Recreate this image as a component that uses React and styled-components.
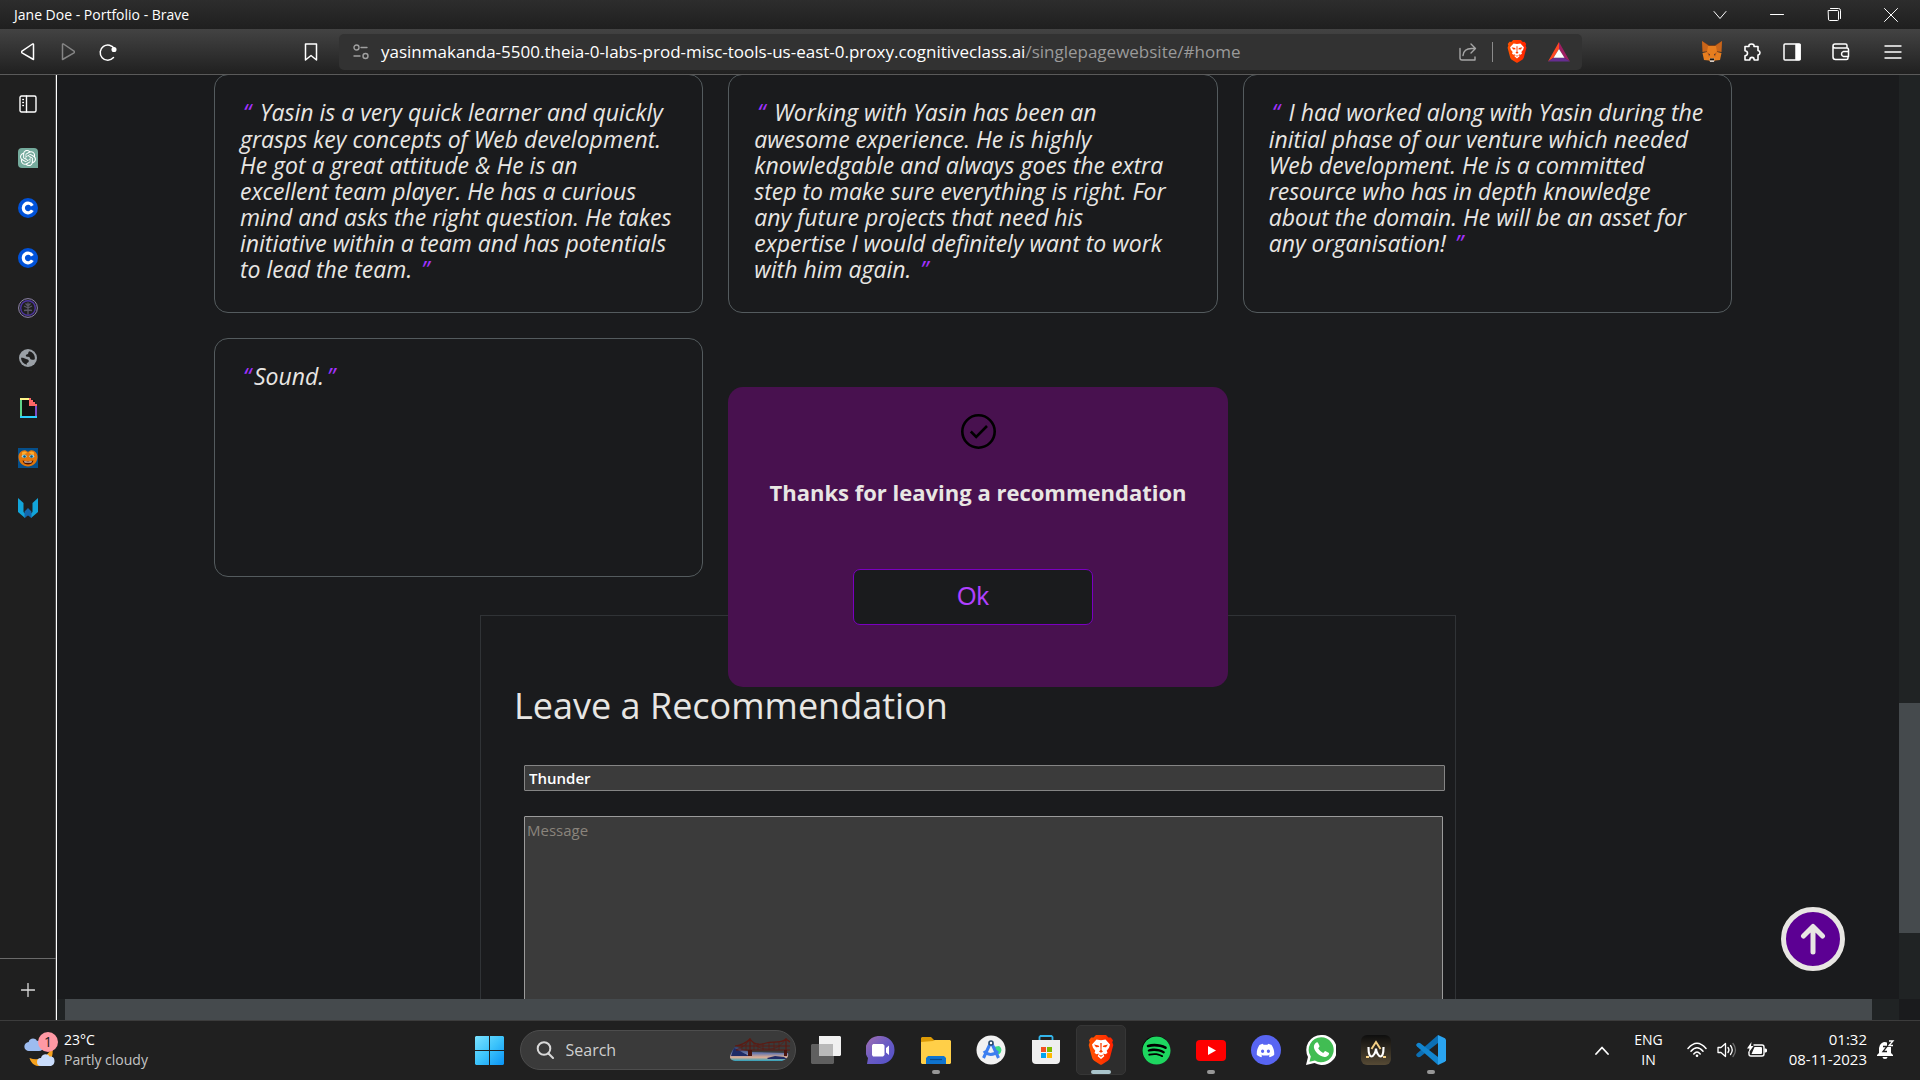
import React from 'react';
import styled, { createGlobalStyle, css } from 'styled-components';
import { SiOpenai } from 'react-icons/si';
import { FaSpotify, FaDiscord } from 'react-icons/fa';

const ui = '"Open Sans", "Noto Sans", sans-serif';

const Global = createGlobalStyle`
  *, *::before, *::after { box-sizing: border-box; }
  html, body, #root { height: 100%; }
  body { margin: 0; background: #1a1b1d; color: #e8e6e3; font-family: ${ui}; overflow: hidden; }
  button, input, textarea { font: inherit; color: inherit; margin: 0; }
  button { padding: 0; border: 0; background: none; }
  svg { display: block; flex: none; }
`;

const Desktop = styled.div`
  height: 100%;
  display: grid;
  grid-template-rows: 29px 46px minmax(0, 1fr) 60px;
`;

/* ---------- window chrome ---------- */

const TitleBar = styled.header`
  display: flex;
  align-items: center;
  justify-content: space-between;
  padding: 0 1px 0 14px;
  background: linear-gradient(#2d2d2d, #1f1f1f);
  color: #fff;
  font-size: 14px;
  line-height: 20px;
`;

const WindowControls = styled.div`
  display: flex;
`;

const WindowButton = styled.button`
  width: 57px;
  height: 29px;
  display: grid;
  place-items: center;
`;

const Toolbar = styled.div`
  display: flex;
  align-items: center;
  padding: 0 4px 0 8px;
  background: linear-gradient(#434343, #202020);
  border-bottom: 1px solid #5a5a5a;
`;

const ToolButton = styled.button`
  width: ${(p) => p.$w || 40}px;
  height: 34px;
  display: grid;
  place-items: center;
`;

const NavGroup = styled.div`
  display: flex;
  width: 284px;
`;

const AddressBar = styled.div`
  flex: 1;
  display: flex;
  align-items: center;
  max-width: 1243px;
  height: 36px;
  margin-left: 9px;
  padding: 0 1px 0 14px;
  border-radius: 5px;
  background: #323232;
`;

const Url = styled.div`
  flex: 1;
  margin-left: 12px;
  font-size: 17px;
  line-height: 24px;
  color: #fff;
  white-space: nowrap;
  span { color: #9a9a9a; }
`;

const Divider = styled.i`
  width: 1px;
  height: 20px;
  margin: 0 4px;
  background: #8b8b8b;
`;

const Extensions = styled.div`
  display: flex;
  margin-left: auto;
`;

/* ---------- body ---------- */

const Body = styled.div`
  display: grid;
  grid-template-columns: 57px minmax(0, 1fr);
  min-height: 0;
`;

const Side = styled.nav`
  display: flex;
  flex-direction: column;
  justify-content: space-between;
  background: #1f1f1f;
  border-right: 1px solid #fff;
  box-shadow: inset -1px 0 #4a4a4a;
`;

const SideList = styled.div`
  display: flex;
  flex-direction: column;
`;

const SideButton = styled.button`
  width: 56px;
  height: ${(p) => p.$h || 50}px;
  display: grid;
  place-items: center;
`;

const SideFoot = styled.div`
  border-top: 1px solid #6a6a6a;
`;

const Viewport = styled.div`
  display: grid;
  grid-template: minmax(0, 1fr) 21px / minmax(0, 1fr) 21px;
  min-height: 0;
`;

const Page = styled.main`
  position: relative;
  overflow: hidden;
  background: #1a1b1d;
`;

const VTrack = styled.div`
  display: flex;
  flex-direction: column;
  justify-content: flex-end;
  padding-bottom: 66px;
  background: #202324;
  &::before { content: ''; height: 230px; background: #454a4d; }
`;

const HTrack = styled.div`
  display: flex;
  padding: 0 27px 0 8px;
  background: #202324;
  &::before { content: ''; flex: 1; background: #454a4d; }
`;

const Cards = styled.section`
  display: grid;
  grid-template-columns: repeat(3, minmax(0, 1fr));
  grid-auto-rows: 239px;
  gap: 25px;
  margin: -1px 167px 0 157px;
`;

const Card = styled.blockquote`
  margin: 0;
  padding: 24px 25px;
  border: 1px solid #545b5e;
  border-radius: 14px;
  font-size: 23px;
  font-style: italic;
  line-height: 26px;
  white-space: nowrap;
`;

const Quote = styled.span`
  margin: 0 3px;
  color: #a232ff;
  line-height: 27px;
`;

const FormRow = styled.section`
  display: flex;
  justify-content: center;
  padding-right: 20px;
`;

const Form = styled.form`
  width: 976px;
  margin-top: 38px;
  padding: 67px 10px 0 43px;
  border: 1px solid #303336;
`;

const FormTitle = styled.h2`
  margin: 0 0 36px -10px;
  font-size: 36px;
  font-weight: 400;
  line-height: 46px;
`;

const NameInput = styled.input`
  display: block;
  width: 100%;
  height: 26px;
  padding: 0 4px;
  border: 1px solid #858585;
  border-radius: 1px;
  background: #3b3b3b;
  color: #fff;
  font-size: 15px;
  font-weight: 600;
  outline: 0;
`;

const Message = styled.textarea`
  display: block;
  width: calc(100% - 2px);
  height: 260px;
  margin-top: 25px;
  padding: 2px;
  border: 1px solid #9b9b9b;
  border-radius: 1px;
  background: #3b3b3b;
  font-size: 15px;
  line-height: 22px;
  resize: none;
  outline: 0;
  &::placeholder { color: #8a847c; opacity: 1; }
`;

const Modal = styled.div`
  position: absolute;
  top: 312px;
  left: calc(50% - 250px);
  width: 500px;
  height: 300px;
  padding-top: 27px;
  display: flex;
  flex-direction: column;
  align-items: center;
  border-radius: 15px;
  background: #48114f;
`;

const ModalTitle = styled.h3`
  margin: 27px 0 61px;
  font-size: 22px;
  font-weight: 700;
  line-height: 32px;
`;

const OkButton = styled.button`
  width: 240px;
  height: 56px;
  margin-right: 10px;
  padding-bottom: 2px;
  border: 1px solid #7a00c0;
  border-radius: 7px;
  background: #1a1b1d;
  color: #b040ff;
  font-family: "Liberation Sans", Arial, sans-serif;
  font-size: 25px;
`;

const UpButton = styled.a`
  position: absolute;
  right: 54px;
  bottom: 28px;
  width: 64px;
  height: 64px;
  display: grid;
  place-items: center;
  border: 5px solid #e8e6e3;
  border-radius: 50%;
  background: #5c0093;
`;

/* ---------- taskbar ---------- */

const Taskbar = styled.footer`
  display: grid;
  grid-template-columns: 1fr auto 1fr;
  align-items: center;
  background: #202020;
  box-shadow: inset 0 1px #3c3c3c;
`;

const Weather = styled.button`
  display: flex;
  align-items: center;
  gap: 6px;
  padding-left: 24px;
  text-align: left;
  font-size: 14px;
  line-height: 20px;
  color: #c4c4c4;
  b { display: block; font-weight: 400; color: #fff; }
`;

const Apps = styled.div`
  display: flex;
  align-items: center;
  gap: 5px;
`;

const AppTile = styled.button`
  position: relative;
  width: 50px;
  height: 50px;
  display: grid;
  place-items: center;
  border: 1px solid transparent;
  border-radius: 5px;
  ${(p) => p.$active && css`background: #2d2d2d; border-color: #363636;`}
  ${(p) => p.$running && css`
    &::after {
      content: '';
      position: absolute;
      bottom: 0;
      left: 50%;
      width: ${p.$active ? 20 : 8}px;
      height: 4px;
      border-radius: 2px;
      background: ${p.$active ? '#a9c4cb' : '#979797'};
      transform: translateX(-50%);
    }
  `}
`;

const SearchBox = styled.label`
  width: 276px;
  height: 40px;
  display: flex;
  align-items: center;
  padding: 0 4px 0 15px;
  border: 1px solid #4d4d4d;
  border-radius: 20px;
  background: #3a3a3a;
  input {
    flex: 1;
    min-width: 0;
    margin-left: 12px;
    padding: 0;
    border: 0;
    outline: 0;
    background: none;
    font-size: 16px;
  }
  input::placeholder { color: #cfcfcf; opacity: 1; }
`;

const Tray = styled.div`
  display: flex;
  align-items: center;
  justify-content: flex-end;
  padding-right: 25px;
  color: #fff;
  font-size: 14px;
  line-height: 20px;
`;

const Lang = styled.button`
  margin: 0 24px 0 25px;
  text-align: center;
  span { display: block; }
`;

const Status = styled.button`
  display: flex;
  align-items: center;
  gap: 10px;
`;

const Clock = styled.button`
  margin: 0 10px 0 22px;
  padding-bottom: 2px;
  text-align: right;
  font-size: 15px;
  span { display: block; }
`;

/* ---------- drawings ---------- */

const Line = ({ w = 20, h = w, sw = 1.5, color = '#fff', children }) => (
  <svg width={w} height={h} viewBox={`0 0 ${w} ${h}`} fill="none" stroke={color} strokeWidth={sw} strokeLinecap="round" strokeLinejoin="round">
    {children}
  </svg>
);

const BraveLion = ({ w, h }) => (
  <svg width={w} height={h} viewBox="0 0 26 30">
    <defs>
      <linearGradient id="lion" x1="0" x2="1"><stop offset="0" stopColor="#ff5500" /><stop offset="1" stopColor="#ff2000" /></linearGradient>
    </defs>
    <path fill="url(#lion)" d="M8 0h10l2.500 2.600 2.300-.2L25 5.200l-.7 2 1 2.800-3.300 12.500c-.4 1.400-1 2.300-2.200 3.200L14 29.500c-.6.400-1.400.4-2 0l-5.800-3.800C5 24.800 4.400 23.900 4 22.500L.7 10l1-2.800-.7-2L3.200 2.400l2.300.2z" />
    <path fill="#fff" d="M8.500 4.500L13 5.300l4.500-.8 4.500 5-1 3.200-2.300 3 .8 2.300-2.200 1.300-2-.8 1 2.700-3.300 2.800-3.300-2.800 1-2.700-2 .8L6.500 18l.8-2.300L5 12.700 4 9.500z" />
    <path fill="#ff3d00" d="M6 9.500l4.500 1 .8 1.500-3.300.3zM20 9.500l-4.500 1-.8 1.500 3.300.3zM12.300 8h1.400l-.2 7 1.500 1.500-2 1.300-2-1.300 1.500-1.500zM10 19.300l3 1.200 3-1.200-3 2.600z" />
  </svg>
);

const Metamask = () => (
  <svg width="20" height="22" viewBox="0 0 20 22">
    <path fill="#763e1a" d="M0 0l7 4h6l7-4-1 9-4 3H5L1 9z" />
    <path fill="#c9651a" d="M0 0l7 5-1 5-5.500 1zM20 0l-7 5 1 5 5.500 1z" />
    <path fill="#e77e1f" d="M6 5h8l1 6 4.500 1-1.500 7-5 .5-1.500 1.500h-3L7 19.500 2 19 .5 12 5 11z" />
    <path fill="#cd6116" d="M5 11l3 2-1 3zM15 11l-3 2 1 3z" />
    <path fill="#233447" d="M6 12.500l2 1v1.200zM14 12.500l-2 1v1.200z" />
    <path fill="#d8cbc0" d="M7.500 17.500h5L12 21H8z" />
    <path fill="#161616" d="M8 17.500h4l.3 1.800H7.700z" />
  </svg>
);

const Bat = () => (
  <svg width="22" height="20" viewBox="0 0 22 24" preserveAspectRatio="none">
    <path fill="#ff4724" d="M11 0v8.500L5.500 19 0 23.500z" />
    <path fill="#9e1f63" d="M11 0l11 23.500L16.500 19 11 8.500z" />
    <path fill="#662d91" d="M0 23.500L5.500 19h11l5.500 4.500z" />
    <path fill="#fff" d="M11 8.500L16.500 19h-11z" />
  </svg>
);

const CoinC = () => (
  <svg width="20" height="20" viewBox="0 0 20 20">
    <circle cx="10" cy="10" r="10" fill="#0052d9" />
    <path d="M14.300 7.700A4.800 4.800 0 1 0 14.300 12.300" fill="none" stroke="#fff" strokeWidth="3.200" />
  </svg>
);

const Gpt = styled.span`
  width: 20px;
  height: 20px;
  display: grid;
  place-items: center;
  border-radius: 4px 4px 0 4px;
  background: #74aa9c;
  color: #fff;
`;

const Tree = () => (
  <svg width="20" height="20" viewBox="0 0 20 20" fill="none">
    <circle cx="10" cy="10" r="9.400" stroke="#9186ad" strokeWidth="1" />
    <circle cx="10" cy="10" r="7.300" stroke="#4d34a0" strokeWidth="1.400" />
    <path d="M10 4.500v12M10 10L6 8M10 10l4-2M10 12l-4 .5M10 12l4 .5M7.500 5.500L10 8l2.500-2.500" stroke="#5b5869" strokeWidth="1.300" />
  </svg>
);

const Globe = () => (
  <svg width="18" height="18" viewBox="0 0 18 18">
    <circle cx="9" cy="9" r="9" fill="#9aa0a6" />
    <path fill="#1f1f1f" d="M10.500 2.200c-1.500.6-1 1.800-1.500 2.600-.6.900-2 .5-2.200 1.700-.1 1 .8 1.300 2.200 1.300 1.800 0 2 1 2.200 2 .2.900 1.500 1 3.600 1 .6 0 1-.4 1.100-1.200a7 7 0 0 0-5.400-7.400zM2 8.800a7 7 0 0 0 5.800 7V13.900c1.300-.2 2-.7 2-1.900-.1-1.500-1.800-1.600-2.800-2C5.500 9.200 4 8.500 2 8.800z" />
  </svg>
);

const Giphy = () => (
  <svg width="17" height="20" viewBox="0 0 17 20">
    <path fill="#121212" d="M2 2h13v16H2z" />
    <path fill="#fff78a" d="M0 0h9v2H0z" />
    <path fill="#5fd38a" d="M0 2h2v16H0z" />
    <path fill="#2bd0ff" d="M0 18h17v2H0z" />
    <path fill="#7a4fc9" d="M15 8h2v10h-2z" />
    <path fill="#ff6666" d="M9 0h2v2h2v2h2v2h2v2H9z" />
  </svg>
);

const Smile = () => (
  <svg width="20" height="20" viewBox="0 0 20 20">
    <path fill="#064f8a" d="M0 0h20v20H0z" />
    <path fill="#e2760b" d="M10 4C6-.5 0 4 .5 9.500 1 15 5 18.500 10 18.500S19 15 19.500 9.500C20 4 14-.5 10 4z" />
    <path fill="#ffae2d" d="M4 4.500c2-1.500 4-1 5 .5L4 7zM16 4.500c-2-1.500-4-1-5 .5l5 2z" />
    <ellipse cx="6.200" cy="8.300" rx="2.400" ry="1.700" fill="#9fd3e2" /><ellipse cx="13.800" cy="8.300" rx="2.400" ry="1.700" fill="#9fd3e2" />
    <circle cx="6.500" cy="8.500" r="1.300" fill="#07587f" /><circle cx="13.500" cy="8.500" r="1.300" fill="#07587f" />
    <path fill="#4a1300" d="M4.500 12.500c3 1 8 1 11 0-1 3-3 4-5.500 4s-4.500-1-5.500-4z" />
    <path fill="#fff" d="M6 13.200c2.500.6 5.500.6 8 0l-.7 1.300H6.700z" />
  </svg>
);

const Wing = () => (
  <svg width="20" height="20" viewBox="0 0 20 20">
    <path fill="#12a5da" d="M0 0l5.500 5v9L8 16.500 7 20 0 14zM20 0l-5.500 5v9L12 16.500l1 3.500 7-6z" />
    <path fill="#1467ae" d="M10 10l3.500 3.500V20L10 17.500 6.500 20v-6.500z" />
  </svg>
);

const WeatherIcon = () => (
  <svg width="34" height="36" viewBox="0 0 34 36">
    <path fill="#f6a11c" d="M28 15c3 10-4 20-14 19-4-.5-7-3-8.500-8C16 30 24 24 28 15z" />
    <path fill="#9dbcf0" d="M5 19a4.500 4.500 0 0 1-.3-9C5 6.500 11 5 13 9c4-1 7 2 6 6 0 2-1 4-4 4z" />
    <path fill="#c9dcfb" d="M17 34a4 4 0 0 1 0-8c.5-4.500 7-5 8.500-1.500 4-.5 5 2 5 4.500s-1.500 5-4.500 5z" />
    <circle cx="24" cy="10" r="10" fill="#ff99a4" />
    <text x="24" y="15" textAnchor="middle" fontSize="14" fill="#1b1b1b" fontFamily="Open Sans, sans-serif">1</text>
  </svg>
);

const WinLogo = () => (
  <svg width="29" height="29" viewBox="0 0 29 29">
    <defs>
      <linearGradient id="win" gradientUnits="userSpaceOnUse" x1="0" y1="0" x2="29" y2="29"><stop offset="0" stopColor="#7be2ff" /><stop offset=".5" stopColor="#3cc3fb" /><stop offset="1" stopColor="#0a93f5" /></linearGradient>
    </defs>
    <path fill="url(#win)" d="M1 0h13v14H0V1zM15 0h13l1 1v13H15zM0 15h14v14H1l-1-1zM15 15h14v13l-1 1H15z" />
  </svg>
);

const Bridge = () => (
  <svg width="61" height="24" viewBox="0 0 61 24">
    <defs>
      <linearGradient id="sky" x1="0" y1="0" x2="0" y2="1"><stop offset="0" stopColor="#27408e" stopOpacity=".5" /><stop offset=".5" stopColor="#6f7cab" /><stop offset=".75" stopColor="#e0ae94" /><stop offset="1" stopColor="#28a0bd" /></linearGradient>
    </defs>
    <path fill="url(#sky)" d="M6 8c5 4 10 5 16 6l36 1c1 4-1 6-6 8H7c-5 0-7-2-7-4s3-9 6-11z" />
    <path fill="#1f2b66" d="M4 10c6 3 12 6 15 8H1zM37 20l8-2 9 1 3 2H38z" />
    <path fill="none" stroke="#5d1a12" strokeWidth="1.200" d="M5 8C12 7 17 4 20 1c5 7 11 6 16 4 6-2 15 1 20-4l4 3M5 8h55M6 12h54M20 0v18M56 0v18" />
    <path fill="none" stroke="#5d1a12" strokeWidth=".7" d="M20 1c-3 6-8 8-14 11M22 3c4 6 9 8 16 8 8 0 13-3 17-9M28 5v7M33 5v7M39 4v8M44 4v8M49 4v8M12 6v6M16 4v8M24 5v7" />
    <path fill="#4a140f" d="M18 12h4v6h-4zM54 12h3v6h-3z" />
  </svg>
);

const TaskView = () => (
  <svg width="30" height="28" viewBox="0 0 30 28">
    <path fill="#5f5f5f" d="M1 8h22v19l-1 1H1l-1-1V9z" />
    <path fill="#f1f1f1" d="M8 0h21l1 1v18l-1 1H8z" />
    <path fill="#b9b9b9" d="M8 8h14v12H8z" />
  </svg>
);

const Chat = () => (
  <svg width="29" height="29" viewBox="0 0 29 29">
    <defs>
      <linearGradient id="chat" x1="0" y1="0" x2="1" y2="1"><stop offset="0" stopColor="#a36fb0" /><stop offset=".5" stopColor="#6a5bc4" /><stop offset="1" stopColor="#5150c8" /></linearGradient>
    </defs>
    <path fill="url(#chat)" d="M14.500 0a14 14 0 1 1 0 28H1l1-6A14 14 0 0 1 14.500 0z" />
    <path fill="#fff" d="M7 8h10l1.500 1.500v9.500L17 20.500H7L6 19V9.500zM20 12l3-2.500v9.500l-3-2.500z" />
  </svg>
);

const Folder = () => (
  <svg width="30" height="27" viewBox="0 0 30 27">
    <path fill="#dd9b06" d="M0 1l1-1h9l3 3v5H0z" />
    <path fill="#ffcf48" d="M0 5l12-1 1.500-1H29l1 1v22l-1 1H1l-1-1z" />
    <path fill="#0f74cf" d="M5 27v-6l2-2h16l2 2v6z" />
    <path stroke="#0a4a8a" strokeWidth="1.200" d="M9 22.500h12" />
  </svg>
);

const Studio = () => (
  <svg width="30" height="30" viewBox="0 0 30 30">
    <circle cx="15" cy="15" r="14.500" fill="#f2f2f2" />
    <path fill="#3ddc84" d="M17 12l6-1a5 5 0 0 1-1 9l-2-1z" />
    <path fill="none" stroke="#3d7ff0" strokeWidth="3" d="M14 9L7.500 23M16 9l6.500 14M8 16c3 4.500 10 4.500 14 0" />
    <circle cx="15" cy="8" r="2" fill="#fff" stroke="#2c4a6b" strokeWidth="1.600" />
  </svg>
);

const Store = () => (
  <svg width="30" height="30" viewBox="0 0 30 30">
    <path fill="none" stroke="#33b5ea" strokeWidth="1.800" d="M8.500 6V2l1-1h11l1 1v4" />
    <path fill="#efefef" d="M1 5h28v20q0 4-4 4H5q-4 0-4-4z" />
    <path fill="#f25022" d="M10 12h5v5h-5z" /><path fill="#7fba00" d="M16 12h5v5h-5z" />
    <path fill="#00a4ef" d="M10 18h5v5h-5z" /><path fill="#ffb900" d="M16 18h5v5h-5z" />
  </svg>
);

const YouTube = () => (
  <svg width="30" height="21" viewBox="0 0 30 21">
    <rect width="30" height="21" rx="4" fill="#f00" />
    <path fill="#fff" d="M12 6l8 4.500-8 4.500z" />
  </svg>
);

const Round = styled.span`
  width: ${(p) => p.$s}px;
  height: ${(p) => p.$s}px;
  display: grid;
  place-items: center;
  border-radius: 50%;
  background: ${(p) => p.$bg};
  color: ${(p) => p.$fg};
`;

const Whats = () => (
  <svg width="30" height="30" viewBox="0 0 30 30">
    <path fill="#fff" d="M15 0a15 15 0 1 1-6.500 28L0 30l2-8A15 15 0 0 1 15 0z" />
    <path fill="#41bd53" d="M15.200 2.300a12.500 12.500 0 1 1-6.300 23.300l-5.400 1.200 1.300-5.200A12.500 12.500 0 0 1 15.200 2.300z" />
    <path fill="#fff" d="M10.500 7.500c.6-.3 1.300-.1 1.600.4l1.400 3c.1.400 0 .8-.3 1.100l-1 1.300c1.200 2.300 2.800 3.700 5 4.600l1.400-1.500c.3-.3.7-.4 1-.2l3 1.500c.5.300.6.700.4 1.400-.6 2-2.600 3-4.400 2.800-5.500-.7-10-5.200-10.700-9.700-.2-1.900.9-3.900 2.600-4.700z" />
  </svg>
);

const Aw = () => (
  <svg width="30" height="30" viewBox="0 0 30 30">
    <defs><linearGradient id="aw" x1="0" y1="0" x2="0" y2="1"><stop offset="0" stopColor="#0e0e0e" /><stop offset="1" stopColor="#564a35" /></linearGradient></defs>
    <rect width="30" height="30" rx="6" fill="url(#aw)" />
    <path fill="none" stroke="#f4cf83" strokeWidth="2" d="M10.500 14L15 7l4.500 7M5 22h3M22 22h3" />
    <path fill="none" stroke="#fff" strokeWidth="2.200" d="M7.500 12c0 7 1.500 9.500 3 9.500s4.500-4 4.500-8c0 4 3 8 4.500 8s3-2.500 3-9.500" />
  </svg>
);

const Code = () => (
  <svg width="30" height="30" viewBox="0 0 30 30">
    <path fill="#0c6fb4" d="M0 20l1 1.500 1.500.7 1.500-.2L22 8V0L1 18.500z" />
    <path fill="#1285cf" d="M0 10l1-1.500 1.500-.7L4 8l18 14v8L1 11.500z" />
    <path fill="#2aa4f0" d="M22 0l7 3.300 1 1.500v20.400l-1 1.500L22 30z" />
  </svg>
);

const Bell = () => (
  <svg width="18" height="20" viewBox="0 0 18 20">
    <path fill="#fff" d="M0 15l2-2V8a6 6 0 0 1 8-5.600V7h4v6l2 2v1H0zM5.500 17h5a2.500 2 0 0 1-5 0z" />
    <path fill="none" stroke="#fff" strokeWidth="1.300" d="M12 1h4l-4 4.500h4" />
    <path fill="none" stroke="#202020" strokeWidth="1.300" d="M6 6.500h4L6 11.500h4" />
  </svg>
);

const sideApps = [
  ['ChatGPT', <Gpt><SiOpenai size={16} /></Gpt>],
  ['Coinbase', <CoinC />],
  ['Coinbase Wallet', <CoinC />],
  ['Arbor', <Tree />],
  ['Website', <Globe />],
  ['Giphy', <Giphy />],
  ['Smile', <Smile />],
  ['Wing', <Wing />],
];

const pinned = [
  ['Task view', <TaskView />],
  ['Chat', <Chat />],
  ['File Explorer', <Folder />, true],
  ['Android Studio', <Studio />],
  ['Microsoft Store', <Store />],
  ['Brave', <BraveLion w={26} h={30} />, true, true],
  ['Spotify', <Round $s={28} $bg="#000" $fg="#1ed760"><FaSpotify size={29} /></Round>],
  ['YouTube', <YouTube />, true],
  ['Discord', <Round $s={30} $bg="#5865f2" $fg="#fff"><FaDiscord size={19} /></Round>],
  ['WhatsApp', <Whats />],
  ['AW', <Aw />],
  ['Visual Studio Code', <Code />, true],
];

const recommendations = [
  [
    'Yasin is a very quick learner and quickly',
    'grasps key concepts of Web development.',
    'He got a great attitude & He is an',
    'excellent team player. He has a curious',
    'mind and asks the right question. He takes',
    'initiative within a team and has potentials',
    'to lead the team.',
  ],
  [
    'Working with Yasin has been an',
    'awesome experience. He is highly',
    'knowledgable and always goes the extra',
    'step to make sure everything is right. For',
    'any future projects that need his',
    'expertise I would definitely want to work',
    'with him again.',
  ],
  [
    'I had worked along with Yasin during the',
    'initial phase of our venture which needed',
    'Web development. He is a committed',
    'resource who has in depth knowledge',
    'about the domain. He will be an asset for',
    'any organisation!',
  ],
];

export default function App() {
  return (
    <Desktop>
      <Global />
      <TitleBar>
        <span>Jane Doe - Portfolio - Brave</span>
        <WindowControls>
          <WindowButton aria-label="Search tabs"><Line w={14} h={10} sw={1}><path d="M1 1.500l6 7 6-7" /></Line></WindowButton>
          <WindowButton aria-label="Minimize"><Line w={14} h={2} sw={1}><path d="M.5.500h13" /></Line></WindowButton>
          <WindowButton aria-label="Restore"><Line w={14} h={14} sw={1}><path d="M1.500 2.500h9a1 1 0 0 1 1 1v8a1 1 0 0 1-1 1h-8a1 1 0 0 1-1-1zM3.500.500h8a2 2 0 0 1 2 2v8" /></Line></WindowButton>
          <WindowButton aria-label="Close"><Line w={14} h={14} sw={1}><path d="M.5.500l13 13M13.500.500l-13 13" /></Line></WindowButton>
        </WindowControls>
      </TitleBar>

      <Toolbar>
        <NavGroup>
          <ToolButton aria-label="Back"><Line w={14} h={18}><path d="M12.500 1.500v15L1 9.800q-1-.8 0-1.600L11.500 1q1-.4 1 .5z" /></Line></ToolButton>
          <ToolButton aria-label="Forward"><Line w={14} h={18} color="#858585"><path d="M1.500 1.500v15L13 9.800q1-.8 0-1.600L2.500 1q-1-.4-1 .5z" /></Line></ToolButton>
          <ToolButton aria-label="Reload">
            <Line w={18} h={18}><path d="M14.500 14.600A7.600 7.600 0 1 1 15.500 6" /><circle cx="15" cy="6.500" r="1.800" fill="#fff" /></Line>
          </ToolButton>
        </NavGroup>
        <ToolButton aria-label="Bookmark" $w={38}><Line w={14} h={18}><path d="M1.500 1h11v16L7 12.500 1.500 17z" /></Line></ToolButton>
        <AddressBar>
          <Line w={16} h={16} sw={1.4} color="#a0a0a0"><circle cx="3.500" cy="3.500" r="2.500" /><path d="M8 3.500h6M1 12h6" /><circle cx="12.500" cy="12" r="2.500" /></Line>
          <Url>
            yasinmakanda-5500.theia-0-labs-prod-misc-tools-us-east-0.proxy.cognitiveclass.ai<span>/singlepagewebsite/#home</span>
          </Url>
          <ToolButton aria-label="Share"><Line w={18} h={18} sw={1.4} color="#a6a6a6"><path d="M1 5.500v9.500a2 2 0 0 0 2 2h13v-3M4 12.500c.5-4.500 4-7 8.500-7h4M12 1l4.500 4.500L12 10" /></Line></ToolButton>
          <Divider />
          <ToolButton aria-label="Brave Shields"><BraveLion w={20} h={23} /></ToolButton>
          <ToolButton aria-label="Brave Rewards" $w={44}><Bat /></ToolButton>
        </AddressBar>
        <Extensions>
          <ToolButton aria-label="MetaMask"><Metamask /></ToolButton>
          <ToolButton aria-label="Extensions"><Line w={18} h={18} sw={1.6}><path d="M2 3.500h4q-.5-2.500 2.500-2.500t2.500 2.500h4V7.500q2 .5 2 2.300t-2 2.300V17h-3.800q0-2.600-2.200-2.600T6.800 17H2v-4.200q2.500-.3 2.500-2.500T2 7.700z" /></Line></ToolButton>
          <ToolButton aria-label="Sidebar"><Line w={18} h={18}><rect x="1" y="1" width="16" height="16" rx="1" /><path fill="#fff" d="M13 1.500h4v15h-4z" /></Line></ToolButton>
          <ToolButton aria-label="Wallet" $w={58}><Line w={18} h={18}><path d="M15 4V2.500q0-1.500-1.500-1.500H3Q1 1 1 3v11q0 2.500 2.500 2.500h11q1.500 0 1.500-1.500v-1.500M1 3q0 2 2 2h12q1.500 0 1.500 1.500v2M16.500 8.500v5h-5q-2-.5-2-2.500t2-2.500z" /></Line></ToolButton>
          <ToolButton aria-label="Menu" $w={46}><Line w={18} h={14} sw={1.4}><path d="M1 1h16M1 7h16M1 13h16" /></Line></ToolButton>
        </Extensions>
      </Toolbar>

      <Body>
        <Side>
          <SideList>
            <SideButton aria-label="Toggle sidebar" $h={58}><Line w={18} h={18} sw={1.4}><rect x="1" y="1" width="16" height="16" rx="1.500" /><path d="M7.500 1v16M3.800 4.500h.6M3.800 7.500h.6M3.800 10.500h.6" /></Line></SideButton>
            {sideApps.map(([name, icon]) => <SideButton key={name} aria-label={name}>{icon}</SideButton>)}
          </SideList>
          <SideFoot>
            <SideButton aria-label="Add" $h={61}><Line w={14} h={14} sw={1.3} color="#dcdcdc"><path d="M7 .5v13M.5 7h13" /></Line></SideButton>
          </SideFoot>
        </Side>

        <Viewport>
          <Page>
            <Cards>
              {recommendations.map((lines) => (
                <Card key={lines[0]}>
                  <Quote>“ </Quote>
                  {lines.map((line, i) => (
                    <React.Fragment key={line}>{i > 0 && <br />}{line}</React.Fragment>
                  ))}
                  <Quote> ”</Quote>
                </Card>
              ))}
              <Card><Quote>“</Quote>Sound.<Quote>”</Quote></Card>
            </Cards>

            <FormRow>
              <Form onSubmit={(e) => e.preventDefault()}>
                <FormTitle>Leave a Recommendation</FormTitle>
                <NameInput aria-label="Name" defaultValue="Thunder" />
                <Message aria-label="Message" placeholder="Message" />
              </Form>
            </FormRow>

            <Modal role="dialog" aria-labelledby="thanks">
              <Line w={35} h={35} sw={2.6} color="#000"><circle cx="17.500" cy="17.500" r="16.200" /><path strokeLinecap="butt" strokeLinejoin="miter" d="M9.800 17.500l5.400 5.400L26 12" /></Line>
              <ModalTitle id="thanks">Thanks for leaving a recommendation</ModalTitle>
              <OkButton type="button">Ok</OkButton>
            </Modal>

            <UpButton href="#home" aria-label="Back to top">
              <Line w={26} h={32} sw={5} color="#e8e6e3"><path d="M13 29V4M3.500 13L13 3.500l9.500 9.500" /></Line>
            </UpButton>
          </Page>
          <VTrack />
          <HTrack />
        </Viewport>
      </Body>

      <Taskbar>
        <Weather>
          <WeatherIcon />
          <span><b>23°C</b>Partly cloudy</span>
        </Weather>
        <Apps>
          <AppTile aria-label="Start"><WinLogo /></AppTile>
          <SearchBox>
            <Line w={18} h={18} sw={2} color="#d8d8d8"><circle cx="8" cy="7.500" r="6.300" /><path d="M12.500 12.500l4.500 4.500" /></Line>
            <input type="text" placeholder="Search" aria-label="Search" />
            <Bridge />
          </SearchBox>
          {pinned.map(([name, icon, running, active]) => (
            <AppTile key={name} aria-label={name} $running={running} $active={active}>{icon}</AppTile>
          ))}
        </Apps>
        <Tray>
          <button aria-label="Show hidden icons"><Line w={14} h={9} sw={1.8}><path d="M1 8l6-6.500L13 8" /></Line></button>
          <Lang><span>ENG</span><span>IN</span></Lang>
          <Status aria-label="Network, volume and battery">
            <Line w={20} h={16} sw={1.5}><path d="M1 6.500q9-10.500 18 0M4 9.300q6-7 12 0M6.800 12q3.200-3.800 6.400 0" /><circle cx="10" cy="13.800" r="1.300" fill="#fff" stroke="none" /></Line>
            <Line w={20} h={16} sw={1.3}><path d="M1 5.500h3L8.500 1.500v13L4 10.500H1zM11 5.500q2 2.500 0 5M13.500 3.500q3.500 4.500 0 9" /><path stroke="#6c6c6c" d="M16 1.500q5 6.500 0 13" /></Line>
            <Line w={20} h={16} sw={1.4}><path d="M7 3h8q2 0 2 2v7q0 2-2 2H4q-2 0-2-2v-2" /><path fill="#fff" stroke="none" d="M7.500 5h6.500q1 0 1 1v5q0 1-1 1H4.500zM17.500 6.500h1.500l1 1v2l-1 1h-1.500zM4.500 0L0 6.500h2.500L1.500 11 6.500 4H4z" /></Line>
          </Status>
          <Clock><span>01:32</span><span>08-11-2023</span></Clock>
          <Bell />
        </Tray>
      </Taskbar>
    </Desktop>
  );
}
